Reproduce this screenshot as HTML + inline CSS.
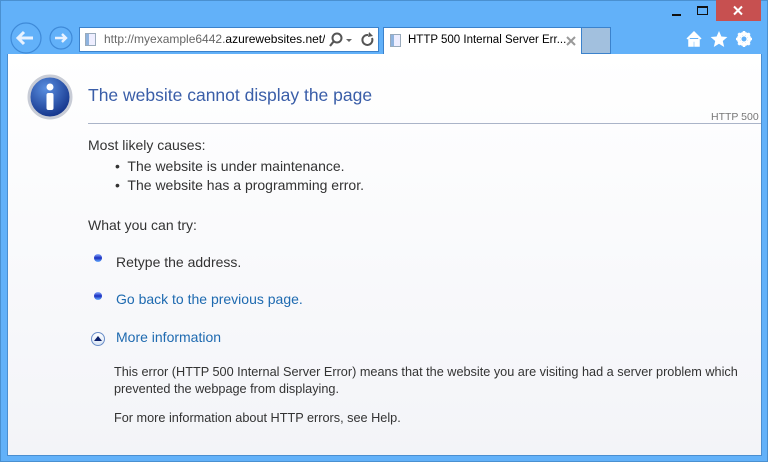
<!DOCTYPE html>
<html><head><meta charset="utf-8"><style>
*{margin:0;padding:0;box-sizing:border-box}
body{width:768px;height:462px;background:#62b1f9;position:relative;overflow:hidden;font-family:"Liberation Sans",sans-serif}
.abs{position:absolute}
.content{left:7px;top:54px;width:755px;height:402px;background:linear-gradient(#fff,#f3f4f8);border:1px solid #4a8ed0;border-top:none}
.t{position:absolute;font-size:14px;color:#333;white-space:nowrap}
.lnk{color:#1e6ab0}
</style></head><body>
<div class="abs" style="left:0;top:0;width:768px;height:462px;border:1px solid #4a90d0"></div>
<div class="abs" style="left:716px;top:0;width:45px;height:21px;background:#c75050"></div>
<svg class="abs" style="left:732px;top:5px" width="12" height="11"><path d="M2 1.5l8 8M10 1.5l-8 8" stroke="#fff" stroke-width="2"/></svg>
<div class="abs" style="left:672px;top:14px;width:9px;height:2px;background:#111"></div>
<div class="abs" style="left:697px;top:6px;width:11px;height:9px;border:1px solid #111;border-top-width:2px"></div>
<svg class="abs" style="left:8px;top:20px" width="70" height="36">
<circle cx="18" cy="18" r="15" fill="#62b1f9" stroke="#3f8ad8" stroke-width="1.2"/>
<path d="M10 18h15M16 12l-6 6 6 6" stroke="#e8f2ff" stroke-width="3" fill="none"/>
<circle cx="53" cy="18" r="11" fill="#62b1f9" stroke="#3f8ad8" stroke-width="1.2"/>
<path d="M47 18h11M54 14l4 4-4 4" stroke="#e8f2ff" stroke-width="2.4" fill="none"/>
</svg>
<div class="abs" style="left:79px;top:27px;width:300px;height:25px;background:#fff;border:1px solid #3b82cc"></div>
<div class="abs" style="left:85px;top:33px;width:11px;height:13px;border:1px solid #9ab;background:linear-gradient(90deg,#8fb3de 35%,#eef 35%)"></div>
<div class="abs" style="left:103px;top:28px;width:222px;height:22px;overflow:hidden"><div class="t" style="left:1px;top:4px;font-size:12px;color:#666">http://myexample6442.<span style="color:#000">azurewebsites.net/</span></div></div>
<svg class="abs" style="left:328px;top:31px" width="50" height="18">
<circle cx="9" cy="7" r="4.5" fill="none" stroke="#555" stroke-width="2"/><path d="M6 10l-4 5" stroke="#555" stroke-width="2.2"/>
<path d="M18 8h6l-3 3z" fill="#666"/>
<path d="M40 4a5 5 0 1 0 4 3" fill="none" stroke="#555" stroke-width="2"/><path d="M41 1l4 4-5 1z" fill="#555"/>
</svg>
<div class="abs" style="left:383px;top:27px;width:199px;height:28px;background:#fff;border:1px solid #3b82cc;border-bottom:none"></div>
<div class="abs" style="left:390px;top:34px;width:11px;height:13px;border:1px solid #9ab;background:linear-gradient(90deg,#8fb3de 35%,#eef 35%)"></div>
<div class="t" style="left:408px;top:34px;font-size:11.5px;color:#000">HTTP 500 Internal Server Err...</div>
<svg class="abs" style="left:566px;top:36px" width="10" height="10"><path d="M1 1l8 8M9 1l-8 8" stroke="#999" stroke-width="2"/></svg>
<div class="abs" style="left:582px;top:27px;width:29px;height:27px;background:#a2c0de;border:1px solid #3b82cc;border-left:none"></div>
<svg class="abs" style="left:686px;top:30px" width="70" height="18">
<path d="M1 9L8 2l7 7M3 8v8h4v-5h2v5h4V8" fill="#fff" stroke="#fff" stroke-width="1.5"/>
<path d="M33 1l2.4 5.5 6 .5-4.6 4 1.4 6-5.2-3.2-5.2 3.2 1.4-6-4.6-4 6-.5z" fill="#fff"/>
<circle cx="58" cy="9" r="5.5" fill="none" stroke="#fff" stroke-width="3"/>
<path d="M58 1v16M50 9h16M52.3 3.3l11.4 11.4M63.7 3.3L52.3 14.7" stroke="#fff" stroke-width="2.5"/>
<circle cx="58" cy="9" r="2.5" fill="#62b1f9"/>
</svg>
<div class="abs content"></div>
<svg class="abs" style="left:27px;top:74px" width="46" height="46">
<defs><radialGradient id="g" cx="40%" cy="30%" r="70%"><stop offset="0" stop-color="#5a8fe0"/><stop offset="1" stop-color="#13338a"/></radialGradient></defs>
<circle cx="23" cy="23" r="21" fill="url(#g)" stroke="#c8ccd6" stroke-width="3"/>
<circle cx="23" cy="13" r="3.5" fill="#fff"/>
<rect x="19.5" y="19" width="7" height="17" rx="2" fill="#fff"/>
</svg>
<div class="t" style="left:88px;top:85px;font-size:17.5px;color:#3a5ea8">The website cannot display the page</div>
<div class="abs" style="left:88px;top:123px;width:673px;height:1px;background:#aab4c8"></div>
<div class="t" style="left:711px;top:111px;font-size:10.5px;color:#777">HTTP 500</div>
<div class="t" style="left:88px;top:137px">Most likely causes:</div>
<div class="t" style="left:115px;top:158px">•&nbsp; The website is under maintenance.</div>
<div class="t" style="left:115px;top:177px">•&nbsp; The website has a programming error.</div>
<div class="t" style="left:88px;top:217px">What you can try:</div>
<div class="abs" style="left:94px;top:254px;width:8px;height:8px;border-radius:50%;background:linear-gradient(#8cb0ff,#1a2ec0 50%,#6ab0ff)"></div>
<div class="t" style="left:116px;top:254px">Retype the address.</div>
<div class="abs" style="left:94px;top:292px;width:8px;height:8px;border-radius:50%;background:linear-gradient(#8cb0ff,#1a2ec0 50%,#6ab0ff)"></div>
<div class="t lnk" style="left:116px;top:291px">Go back to the previous page.</div>
<div class="abs" style="left:91px;top:332px;width:14px;height:14px;border-radius:50%;border:1px solid #6a8ec8;background:linear-gradient(#fff,#d8e4f4)"></div>
<div class="abs" style="left:94px;top:336px;width:0;height:0;border-left:4px solid transparent;border-right:4px solid transparent;border-bottom:5px solid #0a1f6a"></div>
<div class="t lnk" style="left:116px;top:329px">More information</div>
<div class="t" style="left:114px;top:364px;font-size:12.7px;line-height:17px;white-space:normal;width:640px">This error (HTTP 500 Internal Server Error) means that the website you are visiting had a server problem which prevented the webpage from displaying.</div>
<div class="t" style="left:114px;top:411px;font-size:12.7px">For more information about HTTP errors, see Help.</div>
</body></html>
